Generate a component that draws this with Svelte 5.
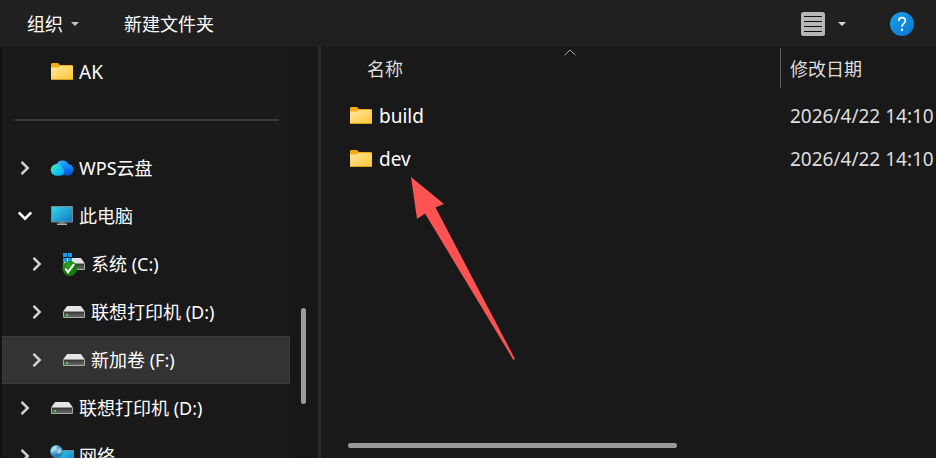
<script>
  const tree = [
    { icon: 'cloud', label: 'WPS云盘' },
    { icon: 'pc', label: '此电脑', open: true },
    { icon: 'system', label: '系统 (C:)', child: true },
    { icon: 'drive', label: '联想打印机 (D:)', child: true },
    { icon: 'drive', label: '新加卷 (F:)', child: true, selected: true },
    { icon: 'drive', label: '联想打印机 (D:)' },
    { icon: 'network', label: '网络' }
  ];
  const files = [
    { name: 'build', date: '2026/4/22 14:10' },
    { name: 'dev', date: '2026/4/22 14:10' }
  ];
</script>

{#snippet folder()}
  <svg class="icon" viewBox="0 0 22 22" aria-hidden="true">
    <path d="M0 3.5Q0 2 1.3 2H6.5Q7.3 2 8 3L8.8 4H20.8Q22 4 22 5.2V10H0Z" fill="#f5ac12" />
    <path d="M0 6.5H6.5Q7.3 6.5 8 5.7L8.8 5H20.8Q22 5 22 6V17.8Q22 19 20.8 19H1.2Q0 19 0 17.8Z" fill="url(#folderFill)" />
    <path d="M0 17.4V17.8Q0 19 1.2 19H20.8Q22 19 22 17.8V17.4Q22 18 20.8 18H1.2Q0 18 0 17.4Z" fill="#dca01c" />
  </svg>
{/snippet}

{#snippet driveBody()}
  <path d="M4.2 5H17.8L22 10.5H0Z" fill="#e4e4e6" />
  <path d="M0 10.5H22V16Q22 17 21 17H1Q0 17 0 16Z" fill="#a8a8a8" />
  <path d="M1 11H21V16H1Z" fill="url(#driveFill)" />
{/snippet}

{#snippet icon(kind)}
  <svg class="icon" viewBox="0 0 22 22" aria-hidden="true">
    {#if kind === 'cloud'}
      <path d="M5 9A6.6 6.6 0 0 1 17.6 7.5L13 18H5Z" fill="url(#cloudTop)" />
      <circle cx="16.4" cy="12.8" r="6" fill="url(#cloudRight)" />
      <path d="M5.6 7C8.5 7 10 8.2 11.4 10.6C12.8 13 14.2 15.3 12 17.3Q10.5 18.8 8 18.8H5.6A5.9 5.9 0 0 1 5.6 7Z" fill="url(#cloudLeft)" />
    {:else if kind === 'pc'}
      <path d="M8.5 17H13.5V18.5H8.5Z" fill="#77838b" />
      <path d="M6 18.5H16V20H6Z" fill="#aab2b7" />
      <rect y="1" width="22" height="16.5" rx="1" fill="#7f878b" />
      <rect x="1" y="2" width="20" height="14.5" fill="url(#screenFill)" />
    {:else if kind === 'network'}
      <rect x="3" y="5" width="20" height="14" fill="#6f8996" />
      <rect x="4" y="6" width="18" height="12" fill="url(#screenFill)" />
      <circle cx="5.5" cy="6.5" r="6.5" fill="url(#globeFill)" />
      <path d="M1 3Q4 0 6 1L5 4L2 6L1 9L0 6ZM7 4L10 3L11 7L8 9L6 7Z" fill="#c1e7f5" opacity=".7" />
    {:else if kind === 'system'}
      {@render driveBody()}
      <path d="M0 0H4V4H0ZM5 0H9V4H5ZM0 5H4V9H0ZM5 5H9V9H5Z" fill="#159be8" />
      <circle cx="6.7" cy="15.5" r="7.4" fill="url(#checkFill)" />
      <path d="M2.3 15.5L5 19.2L11 11.2" fill="none" stroke="#fff" stroke-width="2" />
    {:else}
      {@render driveBody()}
      <rect x="3" y="13" width="2" height="2" fill="#35e03a" />
    {/if}
  </svg>
{/snippet}

<svg class="defs" aria-hidden="true">
  <defs>
    <linearGradient id="folderFill" x2="1" y2="1"><stop stop-color="#ffe7a0" /><stop offset="1" stop-color="#fdc632" /></linearGradient>
    <linearGradient id="driveFill" x2="0" y2="1"><stop stop-color="#383838" /><stop offset="1" stop-color="#6a6a6a" /></linearGradient>
    <linearGradient id="cloudTop" x2="1" y2="1"><stop stop-color="#35b7ff" /><stop offset="1" stop-color="#0875f0" /></linearGradient>
    <linearGradient id="cloudRight" x2="0" y2="1"><stop stop-color="#1597ff" /><stop offset="1" stop-color="#0650d0" /></linearGradient>
    <linearGradient id="cloudLeft" x2="1" y2="1"><stop stop-color="#4ceba5" /><stop offset=".6" stop-color="#12c4f3" /><stop offset="1" stop-color="#00a9ff" /></linearGradient>
    <linearGradient id="screenFill" x2="1" y2="1"><stop stop-color="#35d6e6" /><stop offset="1" stop-color="#1078c8" /></linearGradient>
    <radialGradient id="globeFill" cx=".35" cy=".3"><stop stop-color="#a8dff2" /><stop offset="1" stop-color="#267fb1" /></radialGradient>
    <radialGradient id="checkFill" cx=".4" cy=".25"><stop stop-color="#38a829" /><stop offset="1" stop-color="#14790e" /></radialGradient>
    <linearGradient id="helpFill" x2="1" y2="1"><stop stop-color="#1ca0e8" /><stop offset="1" stop-color="#0874d2" /></linearGradient>
  </defs>
</svg>

<div class="window">
  <header class="toolbar">
    <button class="organize">组织
      <svg width="8" height="4" viewBox="0 0 8 4" aria-hidden="true"><path d="M0 0H8L4 4Z" fill="#c8c8c8" /></svg>
    </button>
    <button>新建文件夹</button>
    <div class="tools">
      <button aria-label="视图">
        <svg width="24" height="24" viewBox="0 0 24 24" aria-hidden="true">
          <rect width="24" height="24" rx="2.5" fill="#b6b6b6" />
          <path d="M3 4.5H21M3 9.5H21M3 14.5H21M3 19.5H21" stroke="#111" />
        </svg>
      </button>
      <button aria-label="更多视图">
        <svg width="8" height="4" viewBox="0 0 8 4" aria-hidden="true"><path d="M0 0H8L4 4Z" fill="#d8d8d8" /></svg>
      </button>
      <button class="help" aria-label="帮助">
        <svg width="24" height="24" viewBox="0 0 24 24" aria-hidden="true">
          <circle cx="12" cy="12" r="12" fill="url(#helpFill)" />
          <path d="M8.7 9Q8.7 5.6 12.1 5.6Q15.4 5.6 15.4 8.6Q15.4 10.3 13.6 11.6Q12 12.8 12 14.8" fill="none" stroke="#fff" stroke-width="1.6" />
          <circle cx="12" cy="17.8" r="1.2" fill="#fff" />
        </svg>
      </button>
    </div>
  </header>

  <div class="body">
    <nav aria-label="导航">
      <div class="tree">
        <div class="row"><span class="toggle"></span><button class="entry latin">{@render folder()}AK</button></div>
        <hr />
        {#each tree as item}
          <div class="row" class:child={item.child} class:selected={item.selected}>
            <button class="toggle" class:open={item.open} aria-label="展开或折叠 {item.label}">
              <svg width="14" height="14" viewBox="0 0 14 14" aria-hidden="true">
                <path d="M3.5 .8L9.7 7L3.5 13.2" fill="none" stroke="currentColor" stroke-width="2.5" />
              </svg>
            </button>
            <button class="entry">{@render icon(item.icon)}{item.label}</button>
          </div>
        {/each}
      </div>
      <div class="vertical"><div class="thumb"></div></div>
    </nav>

    <main>
      <table>
        <thead>
          <tr>
            <th class="name">
              <button>名称</button>
              <svg class="sort" width="12" height="7" viewBox="0 0 12 7" aria-hidden="true"><path d="M.6 6.2L6 1L11.4 6.2" fill="none" stroke="#aaa" /></svg>
            </th>
            <th class="date"><button>修改日期</button></th>
          </tr>
        </thead>
        <tbody>
          {#each files as file}
            <tr>
              <td><button class="entry latin">{@render folder()}{file.name}</button></td>
              <td class="date">{file.date}</td>
            </tr>
          {/each}
        </tbody>
      </table>
      <div class="horizontal"><div class="thumb"></div></div>
      <svg class="arrow" width="106" height="184" viewBox="0 0 106 184" aria-hidden="true">
        <path d="M1 0L34 27L25.5 30.5L105 182L103.5 183L15 36.5L7 42Z" fill="#ff5252" />
      </svg>
    </main>
  </div>
</div>

<style>
  :global(body) { margin: 0; background: #191919; }
  .defs { position: absolute; width: 0; height: 0; }
  .window {
    display: flex;
    flex-direction: column;
    height: 100vh;
    overflow: hidden;
    background: #191919;
    color: #fff;
    font: 18px/24px "Noto Sans", "Noto Sans CJK SC", sans-serif;
  }
  button {
    padding: 0;
    border: 0;
    background: none;
    color: inherit;
    font: inherit;
    white-space: nowrap;
  }
  svg { display: block; flex: none; }
  .toolbar {
    display: flex;
    align-items: center;
    gap: 45px;
    flex: 0 0 47px;
    box-sizing: border-box;
    padding: 0 22px 0 27px;
    background: #202020;
  }
  .toolbar button { display: flex; align-items: center; gap: 8px; }
  .tools { display: flex; align-items: center; gap: 13px; margin-left: auto; }
  .tools .help { margin-left: 31px; }
  .body { display: flex; flex: 1; min-height: 0; }
  nav {
    display: flex;
    flex: 0 0 316px;
    border-left: 2px solid #111;
    border-right: 3px solid #2b2b2b;
  }
  .tree { flex: 1; padding-top: 1px; overflow: hidden; }
  .row { display: flex; align-items: center; height: 48px; padding-left: 15px; }
  .row.child { padding-left: 27px; }
  .row.selected {
    box-sizing: border-box;
    border: 1px solid #3a3a3a;
    padding-left: 26px;
    background: #333;
  }
  .toggle { display: flex; flex: 0 0 34px; box-sizing: border-box; color: #d0d0d0; }
  .toggle svg { margin-left: 1px; }
  .toggle.open { color: #fff; }
  .toggle.open svg { transform: rotate(90deg); }
  .entry { display: flex; align-items: center; gap: 6px; }
  .icon { width: 22px; height: 22px; overflow: visible; }
  .latin { font-size: 19px; }
  hr {
    height: 2px;
    margin: 23px 11px 23px 13px;
    border: 0;
    background: #3b3b3b;
  }
  .vertical { flex: 0 0 28px; box-sizing: border-box; padding: 261px 0 0 11px; background: #171717; }
  .vertical .thumb { width: 5px; height: 96px; border-radius: 3px; background: #9a9a9a; }
  main {
    position: relative;
    display: flex;
    flex: 1;
    min-width: 0;
    flex-direction: column;
    justify-content: space-between;
    padding-left: 27px;
    overflow: hidden;
  }
  table { width: 100%; table-layout: fixed; border-collapse: collapse; }
  th, td { padding: 0; font-weight: 400; text-align: left; white-space: nowrap; }
  th { height: 43px; padding-bottom: 4px; color: #dedede; }
  th.name { position: relative; padding-left: 19px; }
  th.date { background: linear-gradient(#606060, #606060) 0 1px / 1px 40px no-repeat; }
  .sort { position: absolute; top: 2px; left: 50%; }
  td { height: 43px; }
  td .entry { gap: 7px; padding-left: 2px; }
  .date { width: 146px; padding-left: 10px; color: #dedede; }
  td.date { font-size: 19px; }
  .horizontal { padding-bottom: 10px; }
  .horizontal .thumb { width: 56%; height: 5px; border-radius: 3px; background: #9a9a9a; }
  .arrow { position: absolute; left: 89px; top: 130px; pointer-events: none; }
</style>
